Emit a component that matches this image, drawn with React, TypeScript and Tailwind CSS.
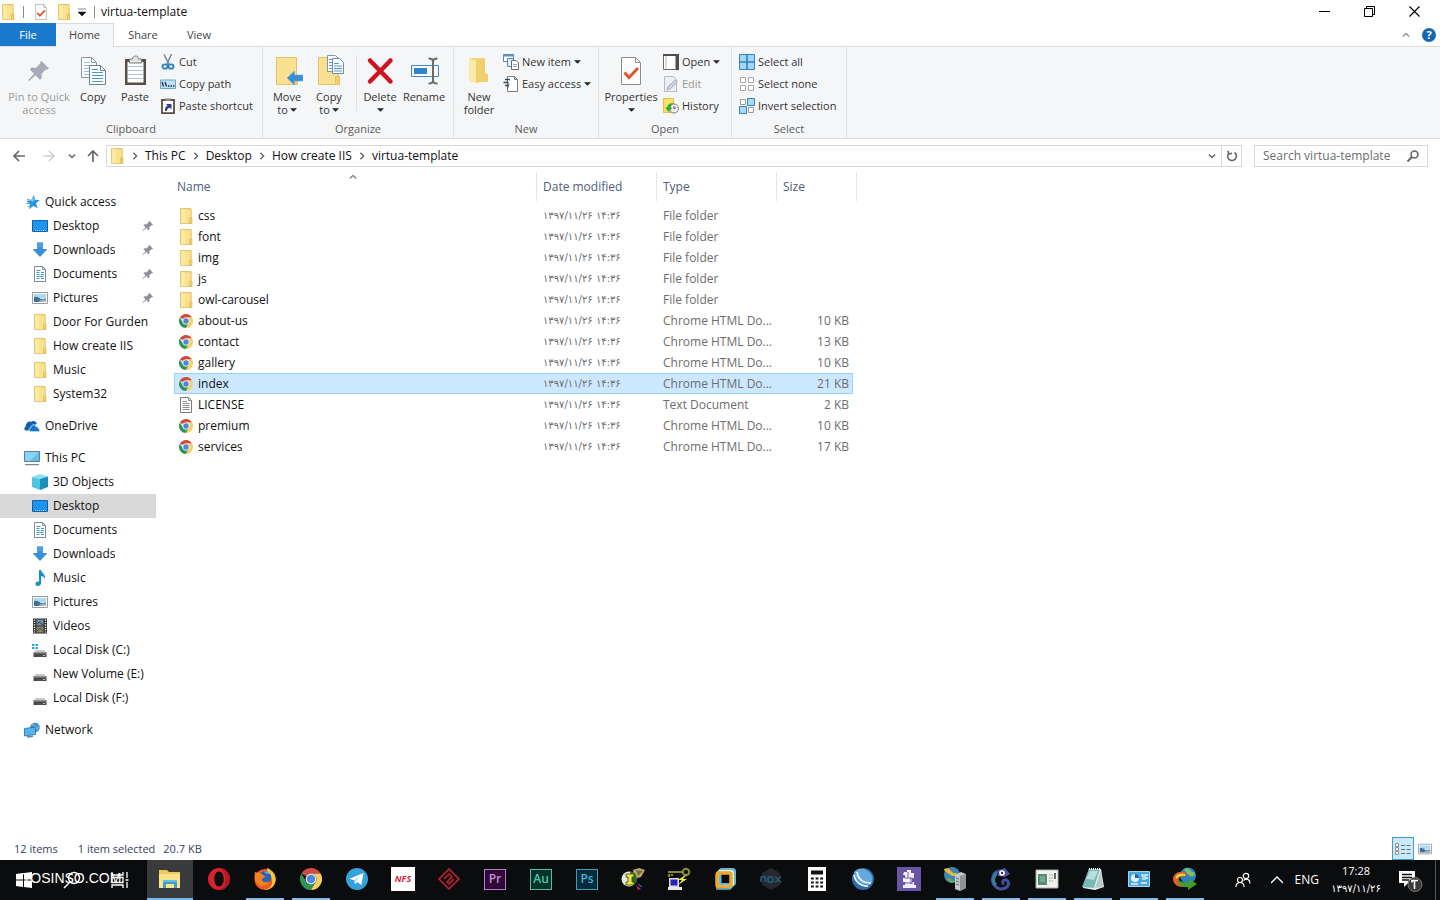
import type { ReactNode } from 'react';

type IconProps = { className?: string };

/* ---------- Shared icons ---------- */

function Folder({ className = 'h-4 w-4' }: IconProps) {
  return (
    <svg viewBox="0 0 16 16" className={className} aria-hidden="true">
      <path d="M2.500.5h10.500v10H2.500z" fill="#f8dc84" stroke="#e0bf62" strokeWidth="0.800" />
      <path d="M2.500.800v14.700h11.200V10.200L13 9.500V.8z" fill="#fce28e" stroke="#e0bf62" strokeWidth="0.800" />
      <path d="M3 1h4v14H3z" fill="#fde9a6" />
      <path d="M11.500 15.300v-5.100h2.300v5.100z" fill="#f5d36f" stroke="#d9b654" strokeWidth="0.700" />
    </svg>
  );
}

function Chrome({ className = 'h-4 w-4' }: IconProps) {
  return (
    <svg viewBox="0 0 24 24" className={className} aria-hidden="true">
      <path d="M12 0A12 12 0 0 1 22.4 6H12A6 6 0 0 0 6.8 9L1.6 6A12 12 0 0 1 12 0z" fill="#d14a40" />
      <path d="M1.6 6A12 12 0 0 0 12 24l5.2-9A6 6 0 0 1 6.8 15z" fill="#2f9458" />
      <path d="M22.4 6A12 12 0 0 1 12 24l5.2-9A6 6 0 0 0 12 6z" fill="#f8d060" />
      <circle cx="12" cy="12" r="5.9" fill="#eef1f6" />
      <circle cx="12" cy="12" r="4.6" fill="#4f86dc" />
    </svg>
  );
}

function TextFile() {
  return (
    <svg viewBox="0 0 16 16" className="h-4 w-4" aria-hidden="true">
      <path d="M2.5.5h8l3 3v12h-11z" fill="#fff" stroke="#7b7b7b" />
      <path d="M10.500.5v3h3M4.500 4.500h4.500M4.500 6.500h7M4.500 8.500h7M4.500 10.500h7M4.500 12.500h7" fill="none" stroke="#8d8d8d" />
    </svg>
  );
}

function Pin({ className = 'h-3 w-3' }: IconProps) {
  return (
    <svg viewBox="0 0 24 24" className={className} fill="currentColor" aria-hidden="true">
      <path d="M14.500 2 22 9.500l-2 1.300-1-.5-4.600 4.600.4 4.200-1.800 1.600-4.500-4.500L2.200 22l-1-1 5.900-6.300-4.300-4.300 1.700-1.800 4.200.4L13.300 4.500l-.4-1.100z" />
    </svg>
  );
}

function Caret() {
  return (
    <svg viewBox="0 0 8 4" className="inline-block h-1 w-[7px] shrink-0" aria-hidden="true">
      <path d="M0 0h8L4 4z" fill="#222" />
    </svg>
  );
}

function Chevron({ className = '' }: IconProps) {
  return (
    <svg viewBox="0 0 10 10" className={`h-2 w-2 ${className}`} fill="none" stroke="currentColor" strokeWidth="1.800" aria-hidden="true">
      <path d="M3 1l4 4-4 4" />
    </svg>
  );
}

/* ---------- Sidebar icons ---------- */

const StarIcon = () => (
  <svg viewBox="0 0 16 16" className="h-4 w-4" aria-hidden="true">
    <path d="M10 1l1 4.700 4.800.3-3.700 3.200 1.500 5-4.400-2.200-4 3.200.6-5.200L2.300 6.800l4.700-.6z" fill="#2795d9" />
    <path d="M9.800 3l.6 3.500L8 8l-1-1.300z" fill="#7cc8f1" />
    <path d="M3 5.500h3M2 9.500h3M3.500 12.500h2" stroke="#69b9e8" />
  </svg>
);
const DesktopIcon = () => (
  <svg viewBox="0 0 16 16" className="h-4 w-4" aria-hidden="true">
    <path d="M.5 2.500h15v11H.5z" fill="#1d95f0" stroke="#12639f" />
    <path d="M3 12.500h12" stroke="#9fd4fa" strokeDasharray="1 1" />
  </svg>
);
const DownloadIcon = () => (
  <svg viewBox="0 0 16 16" className="h-4 w-4" aria-hidden="true">
    <path d="M5 .5h6V7h4.500L8 15 .5 7H5z" fill="#3c8edb" />
    <path d="M5 2.500h6M5 4.500h6" stroke="#6eb0ea" strokeWidth="0.800" />
  </svg>
);
const DocumentIcon = () => (
  <svg viewBox="0 0 16 16" className="h-4 w-4" aria-hidden="true">
    <path d="M2.500.5h8l3 3v12h-11z" fill="#fff" stroke="#7f8b99" />
    <path d="M10.500.5v3h3" fill="none" stroke="#7f8b99" />
    <path d="M4.500 4.500h4M4.500 6.500h3M9 6.500h3M4.500 8.500h3M9 8.500h3M4.500 10.500h7M4.500 12.500h3M9 12.500h3" stroke="#4b8fc9" />
  </svg>
);
const PictureIcon = () => (
  <svg viewBox="0 0 16 16" className="h-4 w-4" aria-hidden="true">
    <path d="M.5 2.500h15v11H.5z" fill="#fff" stroke="#9a9a9a" />
    <path d="M2 4h12v4H2z" fill="#a9daf5" />
    <path d="M2 7c3-1 5 1 7 2l5-.5V12H2z" fill="#3f7195" />
    <path d="M7 11c2-1.500 5-1.500 7-1.500V12H7z" fill="#9bb6c5" />
  </svg>
);
const CloudIcon = () => (
  <svg viewBox="0 0 16 16" className="h-4 w-4" aria-hidden="true">
    <path d="M1.500 12.500C0 12-.2 9.500 1.700 8.800 1.500 5 5 2.500 7.400 4c1-1.800 5-1.500 5.300 2L8 8l-3 4.500z" fill="#0f5fae" />
    <path d="M6.500 13.700c-2.200-.6-1.800-3.700.3-4 .2-3.300 4.300-4 5.300-1 1.700-.5 2.500.6 2.300 1.900 2 .3 1.700 3.100-.1 3.100z" fill="#1876ca" stroke="#fff" strokeWidth="0.700" />
  </svg>
);
const ComputerIcon = () => (
  <svg viewBox="0 0 16 16" className="h-4 w-4" aria-hidden="true">
    <path d="M.5 1.500h15v10H.5z" fill="#5fbdf0" stroke="#5c7f97" />
    <path d="M1 2h14L6 11H1z" fill="#8ad3f7" />
    <path d="M1 14h14v1.200H1z" fill="#75838d" />
  </svg>
);
const CubeIcon = () => (
  <svg viewBox="0 0 16 16" className="h-4 w-4" aria-hidden="true">
    <path d="M0 3l8-3 8 2.500L8 5z" fill="#8be0ef" />
    <path d="M0 3l8 2v11l-8-3z" fill="#4cc6e2" />
    <path d="M8 5l8-2.500V13l-8 3z" fill="#1b8fb9" />
  </svg>
);
const MusicIcon = () => (
  <svg viewBox="0 0 16 16" className="h-4 w-4" aria-hidden="true">
    <path d="M7 0h2c.4 3 5 4 4 9-.5-2-2.300-2.900-3.800-3.100V12.500c0 2.200-1.500 3.500-3.500 3.500-3 0-3.200-4 0-4.500.6-.1 1 0 1.300.2z" fill="#1593b8" />
  </svg>
);
const VideoIcon = () => (
  <svg viewBox="0 0 16 16" className="h-4 w-4" aria-hidden="true">
    <path d="M1 .5h14v15H1z" fill="#2d2d2d" />
    <path d="M4.500 1.500h7v6h-7z" fill="#6f8fa8" />
    <path d="M4.500 8.500h7v6h-7z" fill="#8a8760" />
    <path d="M2.500 1.500v13M13.500 1.500v13" stroke="#fff" strokeWidth="1.400" strokeDasharray="1.200 1.200" />
    <path d="M5 6l2-2 4 3M5 13l3-3 3 3" stroke="#33485a" fill="none" />
  </svg>
);
function DiskIcon({ system = false }: { system?: boolean }) {
  return (
    <svg viewBox="0 0 16 16" className="h-4 w-4" aria-hidden="true">
      {system && <path d="M0 2h2.500v2H0zM3.500 2H6v2H3.500zM0 5h2.500v2H0zM3.500 5H6v2H3.500z" fill="#2aa7df" />}
      <path d="M4 8h8.500l2 2.500h-13z" fill="#c9c9c9" />
      <path d="M1.500 10.500h13V15h-13z" fill="#4a4a4a" />
      <path d="M1.500 11h13" stroke="#8e8e8e" />
      <path d="M11 13.500h2" stroke="#9be07c" />
    </svg>
  );
}
const NetworkIcon = () => (
  <svg viewBox="0 0 16 16" className="h-4 w-4" aria-hidden="true">
    <circle cx="11" cy="5.500" r="4.800" fill="#3d8fc7" />
    <path d="M8 2c3 1 2 3 5 3M9 8c2-1 4 0 6-3" stroke="#a7d8f3" fill="none" />
    <path d="M.5 6.500l11-1.500v7.500L.5 14z" fill="#55b4ec" stroke="#2b6f9f" strokeWidth="0.800" />
    <path d="M3 15l6-.8" stroke="#5c7f97" strokeWidth="1.400" />
  </svg>
);

/* ---------- Ribbon icons ---------- */

const CopyIcon = () => (
  <svg viewBox="0 0 32 32" className="h-8 w-8" aria-hidden="true">
    <path d="M4.500 2.500h10l5 5v15h-15z" fill="#fff" stroke="#8b97a5" />
    <path d="M14.500 2.500v5h5" fill="none" stroke="#8b97a5" />
    <path d="M7 7.500h6M7 10.500h10M7 13.500h10M7 16.500h10M7 19.500h10" stroke="#8fbfe4" />
    <path d="M12.500 10.500h11l5 5v14h-16z" fill="#fff" stroke="#70808f" />
    <path d="M23.500 10.500v5h5" fill="none" stroke="#70808f" />
    <path d="M15 14.500h6M15 17.500h11M15 20.500h11M15 23.500h11M15 26.500h11" stroke="#4a97d4" />
  </svg>
);
function ClipboardIcon() {
  return (
    <svg viewBox="0 0 32 32" className="h-8 w-8" aria-hidden="true">
      <path d="M6 4h21v26H6z" fill="#5a4f45" />
      <path d="M8.500 7h16v20.500h-16z" fill="#fff" />
      <path d="M8.500 11.500h16M8.500 15.500h16M8.500 19.500h16M8.500 23.500h16" stroke="#a9c3d8" />
      <path d="M10.500 4h3c0-4 6-4 6 0h3v4h-12z" fill="#dfe3e6" stroke="#77797a" />
    </svg>
  );
}
const ScissorsIcon = () => (
  <svg viewBox="0 0 16 16" className="h-4 w-4" fill="none" aria-hidden="true">
    <path d="M4 .5L9.500 11M11.500 0L6.500 11" stroke="#7b8691" strokeWidth="1.500" />
    <ellipse cx="5" cy="12.500" rx="2.600" ry="2.200" stroke="#2e80bd" strokeWidth="1.800" />
    <ellipse cx="11" cy="12.500" rx="2.600" ry="2.200" stroke="#2e80bd" strokeWidth="1.800" />
  </svg>
);
const CopyPathIcon = () => (
  <svg viewBox="0 0 16 16" className="h-4 w-4" aria-hidden="true">
    <path d="M.5 4h15v8.500H.5z" fill="#bfe2f8" stroke="#6aa7d0" />
    <path d="M2 6l1.500 4.500M5 6l1.500 4.500" stroke="#17334c" strokeWidth="1.300" />
    <path d="M8 10h1.500M10.500 10H12M13 10h1.300" stroke="#17334c" strokeWidth="1.400" />
  </svg>
);
const PasteShortcutIcon = () => (
  <svg viewBox="0 0 16 16" className="h-4 w-4" aria-hidden="true">
    <path d="M2 2h12v13.200H2z" fill="#fff" stroke="#5a4f45" strokeWidth="1.800" />
    <path d="M5 .5h6V3H5z" fill="#8b8b8b" />
    <path d="M5 13c-.3-3 .8-4.700 2.600-5.300L6 6h5.500v5.500L9.900 9.800C8.200 10 7 11 6.800 13z" fill="#2f3f86" />
  </svg>
);
const MoveIcon = () => (
  <svg viewBox="0 0 32 32" className="h-8 w-8" aria-hidden="true">
    <path d="M5.500 2.500h20v27h-20z" fill="#fae191" stroke="#e2c36b" />
    <path d="M22.500 29.500v-8h4v8z" fill="#f2d173" stroke="#e2c36b" />
    <path d="M16 23l7.500-7v4H32v6h-8.500v4z" fill="#3b8fd0" stroke="#6fb1e3" strokeWidth="0.600" />
  </svg>
);
const CopyToIcon = () => (
  <svg viewBox="0 0 32 32" className="h-8 w-8" aria-hidden="true">
    <path d="M5.500 2.500h20v27h-20z" fill="#fae191" stroke="#e2c36b" />
    <path d="M22.500 29.500v-8h4v8z" fill="#f2d173" stroke="#e2c36b" />
    <path d="M14.500.5h8l3 3v13h-11z" fill="#fff" stroke="#8096a9" />
    <path d="M19.500 3.500h7l4 4v11h-11z" fill="#fff" stroke="#708ba3" />
    <path d="M16 4.500h3M16 7.500h3M16 10.500h3M16 13.500h3M21 8.500h5M21 11h8M21 13.500h8M21 16h8" stroke="#4a97d4" />
  </svg>
);
const DeleteIcon = () => (
  <svg viewBox="0 0 32 32" className="h-8 w-8" aria-hidden="true">
    <path d="M6 5.500l20.500 21M26.500 5.500L6 26.500" stroke="#cf1420" strokeWidth="4.500" strokeLinecap="round" />
  </svg>
);
const RenameIcon = () => (
  <svg viewBox="0 0 32 32" className="h-8 w-8" fill="none" aria-hidden="true">
    <path d="M3.500 10.500h27v11h-27z" fill="#f7fbfe" stroke="#4089c7" />
    <path d="M6 13h13v6H6z" fill="#2f84cc" />
    <path d="M20.500 3.500c3 0 4.500 1 4.500 3v19c0 2-1.500 3-4.500 3M29.500 3.500c-3 0-4.500 1-4.500 3v19c0 2 1.500 3 4.500 3" stroke="#6b6b6b" strokeWidth="2" />
  </svg>
);
const NewFolderIcon = () => (
  <svg viewBox="0 0 32 32" className="h-8 w-8" aria-hidden="true">
    <path d="M6 3h16v15l3 1v8H8z" fill="#f6d678" />
    <path d="M6 3l7 3v23l-7-4z" fill="#fceaa9" />
    <path d="M13 6l9-3v16l3 1v6l-12 2z" fill="#f2cf6e" />
  </svg>
);
const NewItemIcon = () => (
  <svg viewBox="0 0 16 16" className="h-4 w-4" aria-hidden="true">
    <path d="M.5.500h10v7H.5z" fill="#fff" stroke="#6a8499" />
    <path d="M.5 1h10v1.500H.5z" fill="#4a97d4" />
    <path d="M4.500 4.500h6v8h-6z" fill="#dff0fb" stroke="#6a8499" />
    <path d="M8.500 6.500h4.500l2.500 2.500v6.500h-7z" fill="#fff" stroke="#6d6d6d" />
    <path d="M10 10.500h4M10 12.500h4" stroke="#9aa7b1" />
  </svg>
);
const EasyAccessIcon = () => (
  <svg viewBox="0 0 16 16" className="h-4 w-4" aria-hidden="true">
    <path d="M4.500.5h7l3 3v12h-10z" fill="#fff" stroke="#7d7d7d" />
    <path d="M11.500.5v3h3" fill="none" stroke="#7d7d7d" />
    <path d="M2 3.500h5M.5 6.500h5M2 9.500h3" stroke="#34495b" strokeWidth="1.300" />
    <path d="M4.500 12.500l1.500-5" stroke="#34495b" />
  </svg>
);
function PropertiesIcon({ className = 'h-8 w-8' }: IconProps) {
  return (
    <svg viewBox="0 0 32 32" className={className} aria-hidden="true">
      <path d="M6.500 2.500h14l5 5v22h-19z" fill="#fff" stroke="#8d8d8d" />
      <path d="M20.500 2.500v5h5" fill="none" stroke="#8d8d8d" />
      <path d="M9.500 17.500l4.500 5 9-9.500" fill="none" stroke="#e0562f" strokeWidth="3" />
    </svg>
  );
}
const OpenIcon = () => (
  <svg viewBox="0 0 16 16" className="h-4 w-4" aria-hidden="true">
    <path d="M.5.500h15v15H.5z" fill="#fff" stroke="#6b6b6b" />
    <path d="M12.500 1H16v15h-3.500z" fill="#4d4d4d" />
    <path d="M0 0h16v2H0z" fill="#4d4d4d" />
    <path d="M3 2v13" stroke="#b5b5b5" />
  </svg>
);
const EditIcon = () => (
  <svg viewBox="0 0 16 16" className="h-4 w-4" aria-hidden="true">
    <path d="M1.500.5h9l3 3v12h-12z" fill="#eceef4" stroke="#b6bac8" />
    <path d="M4 14l1-3.500L12.500 4l2 2-7.200 7z" fill="#cdd0dc" stroke="#a9aec0" />
  </svg>
);
const HistoryIcon = () => (
  <svg viewBox="0 0 16 16" className="h-4 w-4" aria-hidden="true">
    <path d="M.5.500h10v14H.5z" fill="#fae05f" stroke="#dfc24c" />
    <circle cx="11" cy="10.500" r="4.500" fill="#f5f5f5" stroke="#7d7d7d" />
    <path d="M11 8v3l2-1.500" stroke="#555" fill="none" />
    <path d="M4 9.500C4.500 6 8 4.500 11 5.500c-2 .5-3.500 2-3.500 4h2L5.800 14 2 9.500z" fill="#3ba63b" />
  </svg>
);
const SelectAllIcon = () => (
  <svg viewBox="0 0 16 16" className="h-4 w-4" aria-hidden="true">
    <path d="M.5.500h15v15H.5z" fill="#a3d7f7" stroke="#3183bd" />
    <path d="M8 0v16M0 8h16" stroke="#2f83c0" strokeWidth="1.600" />
  </svg>
);
const SelectNoneIcon = () => (
  <svg viewBox="0 0 16 16" className="h-4 w-4" fill="#fff" stroke="#a9a9a9" aria-hidden="true">
    <path d="M1.500 1.500h5v5h-5zM9.500 1.500h5v5h-5zM1.500 9.500h5v5h-5zM9.500 9.500h5v5h-5z" />
  </svg>
);
const InvertIcon = () => (
  <svg viewBox="0 0 16 16" className="h-4 w-4" aria-hidden="true">
    <path d="M1.500 1.500h5v5h-5zM9.500 9.500h5v5h-5z" fill="#fff" stroke="#9a9a9a" />
    <path d="M8.500.500h7v7h-7zM.5 8.500h7v7h-7z" fill="#a8d9f7" stroke="#3183bd" />
  </svg>
);

/* ---------- Ribbon parts ---------- */

function BigButton({ icon, width, children }: { icon: ReactNode; width: string; children: ReactNode }) {
  return (
    <button type="button" className={`flex ${width} shrink-0 flex-col items-center pt-1 text-center leading-[13px]`}>
      {icon}
      <span className="mt-[3px] flex flex-col items-center whitespace-nowrap">{children}</span>
    </button>
  );
}

function SmallButton({ icon, label, caret = false, muted = false }: { icon: ReactNode; label: string; caret?: boolean; muted?: boolean }) {
  return (
    <button type="button" className={`flex h-[22px] items-center gap-[3px] whitespace-nowrap ${muted ? 'text-[#9a9a9a]' : ''}`}>
      {icon}
      <span>{label}</span>
      {caret && <Caret />}
    </button>
  );
}

function Group({ label, width, children }: { label: string; width: string; children: ReactNode }) {
  return (
    <section aria-label={label} className={`flex ${width} shrink-0 flex-col border-r border-[#e2e3e4]`}>
      <div className="flex h-[74px] pt-1">{children}</div>
      <div className="text-center leading-4 text-[#5a5a5a]">{label}</div>
    </section>
  );
}

/* ---------- Data ---------- */

type NavItem = { label: string; icon: ReactNode; pinned?: boolean; active?: boolean };
type NavGroup = { head: NavItem; items: NavItem[] };

const navGroups: NavGroup[] = [
  {
    head: { label: 'Quick access', icon: <StarIcon /> },
    items: [
      { label: 'Desktop', icon: <DesktopIcon />, pinned: true },
      { label: 'Downloads', icon: <DownloadIcon />, pinned: true },
      { label: 'Documents', icon: <DocumentIcon />, pinned: true },
      { label: 'Pictures', icon: <PictureIcon />, pinned: true },
      { label: 'Door For Gurden', icon: <Folder /> },
      { label: 'How create IIS', icon: <Folder /> },
      { label: 'Music', icon: <Folder /> },
      { label: 'System32', icon: <Folder /> },
    ],
  },
  { head: { label: 'OneDrive', icon: <CloudIcon /> }, items: [] },
  {
    head: { label: 'This PC', icon: <ComputerIcon /> },
    items: [
      { label: '3D Objects', icon: <CubeIcon /> },
      { label: 'Desktop', icon: <DesktopIcon />, active: true },
      { label: 'Documents', icon: <DocumentIcon /> },
      { label: 'Downloads', icon: <DownloadIcon /> },
      { label: 'Music', icon: <MusicIcon /> },
      { label: 'Pictures', icon: <PictureIcon /> },
      { label: 'Videos', icon: <VideoIcon /> },
      { label: 'Local Disk (C:)', icon: <DiskIcon system /> },
      { label: 'New Volume (E:)', icon: <DiskIcon /> },
      { label: 'Local Disk (F:)', icon: <DiskIcon /> },
    ],
  },
  { head: { label: 'Network', icon: <NetworkIcon /> }, items: [] },
];

type Kind = 'folder' | 'html' | 'text';
const kindLabel: Record<Kind, string> = { folder: 'File folder', html: 'Chrome HTML Do...', text: 'Text Document' };
const files: { name: string; kind: Kind; size?: string; selected?: boolean }[] = [
  { name: 'css', kind: 'folder' },
  { name: 'font', kind: 'folder' },
  { name: 'img', kind: 'folder' },
  { name: 'js', kind: 'folder' },
  { name: 'owl-carousel', kind: 'folder' },
  { name: 'about-us', kind: 'html', size: '10 KB' },
  { name: 'contact', kind: 'html', size: '13 KB' },
  { name: 'gallery', kind: 'html', size: '10 KB' },
  { name: 'index', kind: 'html', size: '21 KB', selected: true },
  { name: 'LICENSE', kind: 'text', size: '2 KB' },
  { name: 'premium', kind: 'html', size: '10 KB' },
  { name: 'services', kind: 'html', size: '17 KB' },
];

function FileIcon({ kind }: { kind: Kind }) {
  if (kind === 'folder') return <Folder />;
  if (kind === 'text') return <TextFile />;
  return <Chrome className="h-3.5 w-4" />;
}

function NavLink({ item, nested = false }: { item: NavItem; nested?: boolean }) {
  return (
    <li>
      <a href="#" className={`flex h-6 items-center gap-[5px] whitespace-nowrap pr-0.5 ${nested ? 'pl-8' : 'pl-6'} ${item.active ? 'bg-[#d9d9d9]' : ''}`}>
        <span className="shrink-0">{item.icon}</span>
        <span className="flex-1">{item.label}</span>
        {item.pinned && <Pin className="h-3 w-3 text-[#8b9097]" />}
      </a>
    </li>
  );
}

/* ---------- Taskbar ---------- */

function AdobeIcon({ text, tone }: { text: string; tone: string }) {
  return <span className={`flex h-[21px] w-[22px] items-center justify-center border text-[12px] font-semibold leading-4 ${tone}`}>{text}</span>;
}

const ExplorerIcon = () => (
  <svg viewBox="0 0 24 24" className="h-6 w-6" aria-hidden="true">
    <path d="M1 3h8l2 2h11v16H1z" fill="#f0c75c" />
    <path d="M1 7h21v14H1z" fill="#fbe38e" />
    <path d="M5 21v-8h14v8h-3v-4H8v4z" fill="#3d9fc9" />
    <path d="M5 13h14v2H5z" fill="#63bfe0" />
  </svg>
);
const OperaIcon = () => (
  <svg viewBox="0 0 24 24" className="h-6 w-6" aria-hidden="true">
    <path fillRule="evenodd" d="M12 1a11 11 0 1 0 0 22 11 11 0 0 0 0-22zm0 3.500c3 0 4.700 3.300 4.700 7.500s-1.700 7.500-4.700 7.500S7.300 16.200 7.300 12 9 4.500 12 4.500z" fill="#d9222d" />
    <path fillRule="evenodd" d="M12 1c6 0 11 5 11 11s-5 11-11 11c4-1 6.500-5 6.500-11S16 2 12 1z" fill="#b01824" />
  </svg>
);
const FirefoxIcon = () => (
  <svg viewBox="0 0 24 24" className="h-6 w-6" aria-hidden="true">
    <circle cx="12" cy="12.500" r="10.500" fill="#ef5a24" />
    <path d="M14 1c5 2 9 6 8.800 12C22 19 17 23.500 11 23c6-1 9-5 8-10-.5-4-5-6-5-12z" fill="#fcc62f" />
    <circle cx="12" cy="10.500" r="6.300" fill="#2a62b5" />
    <path d="M2 5c2 1 4 .5 6 1.500 2 .8 2 2.500 4.500 2.500-1 2-3.500 1.800-3.500 4 .5 2.600 4.500 3 7 1-1 5-7 6-10.500 3.500S1 10 2 5z" fill="#f58220" />
    <path d="M11 5c2-1 5 0 6 2l-3-.3z" fill="#64b4e6" />
  </svg>
);
const TelegramIcon = () => (
  <svg viewBox="0 0 24 24" className="h-6 w-6" aria-hidden="true">
    <circle cx="12" cy="12" r="11" fill="#35a3da" />
    <path d="M4.500 11.700L18.500 6l-2.200 12-4-3-2.200 2.300-.8-4z" fill="#fff" />
    <path d="M9.300 13.300L16 8.300l-5.300 6z" fill="#a9cfe3" />
  </svg>
);
const NfsIcon = () => (
  <span className="flex h-6 w-6 items-center justify-center bg-white text-[9px] font-bold italic text-[#d01f3c]">NFS</span>
);
const DiamondIcon = () => (
  <svg viewBox="0 0 24 24" className="h-6 w-6" fill="none" stroke="#a3202c" aria-hidden="true">
    <path d="M12 2l10 10-10 10L2 12z" strokeWidth="1.800" />
    <path d="M7 12l5-5 3 3-5 5M17 12l-5 5-2-2 5-5" strokeWidth="1.900" />
  </svg>
);
const InspectorIcon = () => (
  <svg viewBox="0 0 24 24" className="h-6 w-6" aria-hidden="true">
    <path d="M12 3l6-2 6 2-4 7-7 2z" fill="#c9a26d" />
    <path d="M15 3l7 1-5 5z" fill="#5f7a3b" />
    <circle cx="8" cy="12" r="7.500" fill="#e9e9e4" />
    <path d="M9 4.500a7.500 7.500 0 0 1 2 14.500z" fill="#2b6a2d" />
    <path d="M5 7h8v3h-2v5h2v3H5v-3h2v-5H5z" fill="#eee43d" stroke="#3f3c10" strokeWidth="0.800" />
    <path d="M15 18l5 4-3 1z" fill="#b23345" />
    <path d="M17 17l4 3" stroke="#3159b3" strokeWidth="1.500" />
  </svg>
);
const PuttyIcon = () => (
  <svg viewBox="0 0 24 24" className="h-6 w-6" aria-hidden="true">
    <path d="M1 5h14M2 7v3M5 7v2" stroke="#8c8435" strokeWidth="2.200" />
    <circle cx="19" cy="5" r="3.200" fill="none" stroke="#8c8435" strokeWidth="2.200" />
    <path d="M2 11h10v9H2z" fill="#ddd" />
    <path d="M3.500 12.500h7v6h-7z" fill="#2222bd" />
    <path d="M1 20h14v3H1z" fill="#e6e6e6" />
    <path d="M20 7l-9 6h4l-4 5 9-6h-4z" fill="#f5ee37" />
  </svg>
);
const VmwareIcon = () => (
  <svg viewBox="0 0 24 24" className="h-6 w-6" fill="none" aria-hidden="true">
    <rect x="7" y="2.500" width="14.500" height="15" rx="2" stroke="#69b7d2" strokeWidth="3" />
    <rect x="5" y="4" width="15" height="15" rx="2" stroke="#e9edd0" strokeWidth="2" />
    <rect x="4" y="6" width="14" height="14" rx="2" stroke="#eda72d" strokeWidth="3.500" />
    <path d="M3 22h14l3-3" stroke="#5fb7d2" strokeWidth="1.500" />
  </svg>
);
const NoxIcon = () => (
  <svg viewBox="0 0 24 24" className="h-6 w-6" fill="none" aria-hidden="true">
    <path d="M12 1l9 5v12l-9 5-9-5V6z" fill="#25292d" />
    <path d="M2 15v-4c0-2 4.500-2 4.500 0v4M14 12.500c0-4-5-4-5 0s5 4 5 0zM16 9.500l6 6M22 9.500l-6 6" stroke="#245c75" strokeWidth="1.700" />
  </svg>
);
const CalculatorIcon = () => (
  <svg viewBox="0 0 24 24" className="h-6 w-6" aria-hidden="true">
    <path d="M3 0h18v24H3z" fill="#fff" />
    <path d="M6 3.500h12v4H6z" fill="#111" />
    <path d="M6 11.500h12M6 15.500h12M6 19.500h12" stroke="#111" strokeWidth="2.200" strokeDasharray="2.800 1.800" />
  </svg>
);
const SwirlIcon = () => (
  <svg viewBox="0 0 24 24" className="h-6 w-6" aria-hidden="true">
    <circle cx="12" cy="12" r="11" fill="#2c6cab" />
    <path d="M3 5c5-6 15-3 18 4 1 3 0 7-2 9C11 19 3 13 3 5z" fill="#67a8dc" />
    <path d="M6 5c1 7 6 11 14 11M3 8c1 7 8 12 14 11" stroke="#f2f8fc" strokeWidth="1.700" fill="none" />
  </svg>
);
const CastleIcon = () => (
  <svg viewBox="0 0 24 24" className="h-6 w-6" aria-hidden="true">
    <path d="M0 0h24v24H0z" fill="#6a55a5" />
    <path d="M7 5h3V3h4v3h3v5h-2v4h2v3h2v3H6v-3h2v-3H6v-4h2V8H6z" fill="#f3effa" />
    <path d="M11 5v5M8 11h7M8 16h8M14 11v6" stroke="#6a55a5" />
  </svg>
);
const IisIcon = () => (
  <svg viewBox="0 0 24 24" className="h-6 w-6" aria-hidden="true">
    <circle cx="9" cy="8" r="8" fill="#3b86b7" />
    <path d="M1 2c5-2 6 1 8 3s5 0 6 3c-4 2-7 1-9-1S2 6 1 2z" fill="#e5b93d" />
    <path d="M3 12c3-3 7 1 9 3l-4 1z" fill="#62a94b" />
    <path d="M12 8l6-3 5 2v14l-6 3-5-2z" fill="#c4c8cb" />
    <path d="M17 9l6-2v14l-6 3z" fill="#8e9397" />
    <path d="M13 11l3 1M13 14l3 1M13 17l3 1" stroke="#62686d" />
  </svg>
);
const ChameleonIcon = () => (
  <svg viewBox="0 0 24 24" className="h-6 w-6" fill="none" aria-hidden="true">
    <path d="M18 7C14 2 6 3 4 9.500 1.500 17 8 23.500 15 21.500c5-1.500 6-6.500 2.500-8.500-3.500-1-5 3-2.500 4" stroke="#414f9d" strokeWidth="3" />
    <path d="M8 6c-4 3-5 9-1 12" stroke="#2e83a7" strokeWidth="3" />
    <path d="M10 3l6-2 5 6-5 3-7-1z" fill="#4f51a0" />
    <circle cx="13" cy="6" r="2.800" fill="#fff" />
    <circle cx="13" cy="6" r="1.200" fill="#333" />
  </svg>
);
const WindowAppIcon = () => (
  <svg viewBox="0 0 24 24" className="h-6 w-6" aria-hidden="true">
    <path d="M1 3h22v18H1z" fill="#f3f4f0" stroke="#aab0a9" />
    <path d="M3 7h9v11H3z" fill="#568b77" />
    <path d="M5 9h5v6H5z" fill="#76a893" />
    <path d="M14 8h4M14 11h4M14 14h4" stroke="#8d9a92" strokeDasharray="1.500 1" />
    <path d="M20 6v6" stroke="#303d36" strokeWidth="1.500" />
  </svg>
);
const NotepadIcon = () => (
  <svg viewBox="0 0 24 24" className="h-6 w-6" aria-hidden="true">
    <path d="M8 2h12l3 18-9 3-12-2z" fill="#eef1ec" />
    <path d="M8 2h11l-6 19-12-1z" fill="#79b7b8" />
    <path d="M9 4h8l-4 9c-3-1-6-1-8-1z" fill="#b8dfdf" />
    <path d="M8 2h12" stroke="#fff" strokeWidth="2" strokeDasharray="1 1" />
    <path d="M14 21l6-18 2 17z" fill="#b3c9c5" />
  </svg>
);
const MonitorAppIcon = () => (
  <svg viewBox="0 0 24 24" className="h-6 w-6" aria-hidden="true">
    <path d="M1.500 4.500h21v15h-21z" fill="#49a9de" stroke="#9bd6f2" />
    <circle cx="8" cy="11" r="4" fill="#e0f3fc" />
    <path d="M8 11V7a4 4 0 0 1 4 4z" fill="#2069a6" />
    <path d="M14 8h2v5M18 13V8h3M18 11h3M4 17h7M14 16h6" stroke="#e0f3fc" strokeWidth="1.300" fill="none" />
  </svg>
);
const IdmIcon = () => (
  <svg viewBox="0 0 24 24" className="h-6 w-6" aria-hidden="true">
    <circle cx="15" cy="8.500" r="8" fill="#2c80bd" />
    <path d="M11 2c4-2 6 0 7 2 2 2 4 0 4 4-5 4-8-1-11-6z" fill="#7cc06a" />
    <path d="M12 5C2 3-3 11 2 17c4 4 9 3 12 2l1-3c-6 1-10-1-9-4 0-2 4-3 8-3z" fill="#e3602b" />
    <path d="M12 7C4 6 2 9 3 12c2-3 5-4 9-3z" fill="#f7dc45" />
    <path d="M6 11c-1 3 3 5 10 4v-3l8 5-9 6v-3C8 21 3 16 6 11z" fill="#3f9e33" />
  </svg>
);

const apps: { name: string; icon: ReactNode; running?: boolean }[] = [
  { name: 'Opera', icon: <OperaIcon /> },
  { name: 'Firefox', icon: <FirefoxIcon />, running: true },
  { name: 'Chrome', icon: <Chrome className="h-[22px] w-[22px]" />, running: true },
  { name: 'Telegram', icon: <TelegramIcon /> },
  { name: 'Need for Speed', icon: <NfsIcon /> },
  { name: 'Launcher', icon: <DiamondIcon /> },
  { name: 'Premiere', icon: <AdobeIcon text="Pr" tone="border-[#b77bc9] bg-[#2d0a36] text-[#c98bdb]" /> },
  { name: 'Audition', icon: <AdobeIcon text="Au" tone="border-[#4fc0a0] bg-[#05322a] text-[#4fc7a6]" /> },
  { name: 'Photoshop', icon: <AdobeIcon text="Ps" tone="border-[#36a3bd] bg-[#062a3a] text-[#47b3d3]" /> },
  { name: 'Inspector', icon: <InspectorIcon /> },
  { name: 'PuTTY', icon: <PuttyIcon /> },
  { name: 'VMware', icon: <VmwareIcon /> },
  { name: 'Nox', icon: <NoxIcon /> },
  { name: 'Calculator', icon: <CalculatorIcon /> },
  { name: 'Browser', icon: <SwirlIcon /> },
  { name: 'Castle', icon: <CastleIcon /> },
  { name: 'IIS Manager', icon: <IisIcon />, running: true },
  { name: 'Chameleon', icon: <ChameleonIcon />, running: true },
  { name: 'Panel', icon: <WindowAppIcon />, running: true },
  { name: 'Notepad', icon: <NotepadIcon />, running: true },
  { name: 'Monitor', icon: <MonitorAppIcon />, running: true },
  { name: 'Download Manager', icon: <IdmIcon />, running: true },
];

function Taskbar() {
  return (
    <footer className="relative flex h-10 shrink-0 items-stretch overflow-hidden bg-[#0b0c0e] text-white">
      <div className="flex w-[147px] shrink-0 items-center">
        <button type="button" aria-label="Start" className="flex w-12 justify-center">
          <svg viewBox="0 0 16 16" className="h-4 w-4" fill="#fff" aria-hidden="true">
            <path d="M0 2l7-1v6.500H0zM8 1l8-1v7.500H8zM0 8.500h7V15l-7-1zM8 8.500h8V16l-8-1z" />
          </svg>
        </button>
        <button type="button" aria-label="Search" className="flex w-12 justify-center">
          <svg viewBox="0 0 18 18" className="h-[18px] w-[18px]" fill="none" stroke="#fff" strokeWidth="1.500" aria-hidden="true">
            <circle cx="11" cy="7" r="5.500" />
            <path d="M7 11l-6 6" />
          </svg>
        </button>
        <button type="button" aria-label="Task view" className="flex w-12 justify-center">
          <svg viewBox="0 0 18 18" className="h-[18px] w-[18px]" fill="none" stroke="#fff" strokeWidth="1.300" aria-hidden="true">
            <path d="M1 1v3h11V1M1 17v-3h11v3M1 6.500h11v5H1zM16 1v6M16 11v6M14.500 9h3" />
          </svg>
        </button>
      </div>
      <span className="pointer-events-none absolute left-[22px] top-2.5 font-['Liberation_Sans',Arial,sans-serif] text-[14px] leading-4">TOSINSO.COM</span>
      <button type="button" aria-label="File Explorer" className="mr-[3px] flex w-[46px] shrink-0 items-center justify-center border-b-2 border-[#76b9ed] bg-[#383a3c]">
        <ExplorerIcon />
      </button>
      {apps.map((app) => (
        <button key={app.name} type="button" aria-label={app.name} className="flex w-[46px] shrink-0 flex-col items-center">
          <span className="flex h-[38px] items-center">{app.icon}</span>
          {app.running && <span className="h-0.5 w-[38px] bg-[#86b9e6]" />}
        </button>
      ))}
      <div className="ml-auto flex shrink-0 items-center">
        <button type="button" aria-label="People" className="mr-5">
          <svg viewBox="0 0 16 16" className="h-4 w-4" fill="none" stroke="#fff" strokeWidth="1.200" aria-hidden="true">
            <circle cx="11" cy="4" r="2.700" />
            <circle cx="5" cy="8" r="2.500" />
            <path d="M1 15c0-6 8-6 8 0M8.500 8.500c3-3 6.500-1 6.500 3" />
          </svg>
        </button>
        <button type="button" aria-label="Show hidden icons" className="mr-3">
          <svg viewBox="0 0 12 12" className="h-3 w-3" fill="none" stroke="#fff" strokeWidth="1.400" aria-hidden="true">
            <path d="M0 9l6-6 6 6" />
          </svg>
        </button>
        <button type="button" className="mr-3 text-[12px]">ENG</button>
        <div className="mr-[18px] w-[50px] text-center text-[11px] leading-[18px]">
          <div>17:28</div>
          <div className="whitespace-nowrap font-['DejaVu_Sans',sans-serif] text-[10px] leading-[18px]">۱۳۹۷/۱۱/۲۶</div>
        </div>
        <button type="button" aria-label="Notifications" className="mr-3">
          <svg viewBox="0 0 24 24" className="h-6 w-6" aria-hidden="true">
            <path d="M0 3h16v12H9l-4 4v-4H0z" fill="#fff" />
            <path d="M3 6.500h10M3 9.500h10M3 12h7" stroke="#111" strokeWidth="1.300" />
            <circle cx="16" cy="16.500" r="7" fill="#3a3a3a" stroke="#777" />
            <path d="M13 14.500v-2h6M15.500 12.500V21" stroke="#fff" strokeWidth="1.600" fill="none" />
          </svg>
        </button>
        <span className="mr-1 h-10 w-px bg-[#55585b]" />
      </div>
    </footer>
  );
}

/* ---------- Page ---------- */

const crumbs = ['This PC', 'Desktop', 'How create IIS', 'virtua-template'];

export default function App() {
  return (
    <div className="flex min-h-screen flex-col overflow-hidden bg-white font-['Open_Sans','Noto_Sans',sans-serif] text-[12px] leading-4 text-[#111]">
      <header className="flex h-[23px] shrink-0 items-center">
        <div className="flex items-center">
          <Folder className="h-4 w-4" />
          <span className="ml-[7px] h-3 w-px bg-[#8b8b8b]" />
          <PropertiesIcon className="ml-2 h-[18px] w-[18px]" />
          <Folder className="ml-1.5 h-4 w-4" />
          <svg viewBox="0 0 8 8" className="ml-1.5 h-2 w-2" aria-hidden="true">
            <path d="M0 1h8M0 4h8L4 8z" fill="#111" stroke="#111" strokeWidth="0.500" />
          </svg>
          <span className="ml-2 h-3 w-px bg-[#8b8b8b]" />
          <h1 className="ml-1.5">virtua-template</h1>
        </div>
        <div className="ml-auto mr-[3px] flex text-black">
          <button type="button" aria-label="Minimize" className="flex h-5 w-[45px] items-center justify-center">
            <svg viewBox="0 0 11 11" className="h-[11px] w-[11px]" stroke="currentColor" aria-hidden="true"><path d="M0 5.500h11" /></svg>
          </button>
          <button type="button" aria-label="Restore" className="flex h-5 w-[45px] items-center justify-center">
            <svg viewBox="0 0 11 11" className="h-[11px] w-[11px]" fill="none" stroke="currentColor" aria-hidden="true"><path d="M.5 2.500h8v8h-8zM2.500 2.500v-2h8v8h-2" /></svg>
          </button>
          <button type="button" aria-label="Close" className="flex h-5 w-[45px] items-center justify-center">
            <svg viewBox="0 0 11 11" className="h-[11px] w-[11px]" stroke="currentColor" strokeWidth="1.200" aria-hidden="true"><path d="M.5.500l10 10M10.500.500l-10 10" /></svg>
          </button>
        </div>
      </header>

      <nav aria-label="Ribbon tabs" className="flex h-6 shrink-0 items-stretch border-b border-[#dadbdc] text-[11px] text-[#444]">
        <button type="button" className="w-14 bg-[#1979ca] text-white">File</button>
        <button type="button" className="-mb-px w-[58px] border-r border-t border-[#dadbdc] bg-[#f5f6f7] pb-0.5">Home</button>
        <button type="button" className="w-[58px]">Share</button>
        <button type="button" className="w-[54px]">View</button>
        <div className="ml-auto mr-1 flex items-center gap-3">
          <button type="button" aria-label="Collapse ribbon" className="text-[#8f959c]"><Chevron className="-rotate-90" /></button>
          <button type="button" aria-label="Help" className="flex h-3.5 w-3.5 items-center justify-center rounded-full bg-[#1468b3] text-[11px] font-bold leading-3 text-white">?</button>
        </div>
      </nav>

      <div className="flex h-[92px] shrink-0 border-b border-[#dadbdc] bg-[#f5f6f7] text-[11px] text-[#333]">
        <Group label="Clipboard" width="w-[263px]">
          <div className="flex pl-1.5 text-[#9a9a9a]">
            <BigButton width="w-[66px]" icon={<span className="flex h-8 w-8 items-center justify-center"><Pin className="h-6 w-6 text-[#a7abb7]" /></span>}>
              <span>Pin to Quick</span>
              <span>access</span>
            </BigButton>
          </div>
          <BigButton width="w-[42px]" icon={<CopyIcon />}>Copy</BigButton>
          <BigButton width="w-[42px]" icon={<ClipboardIcon />}>Paste</BigButton>
          <div className="pl-1">
            <SmallButton icon={<ScissorsIcon />} label="Cut" />
            <SmallButton icon={<CopyPathIcon />} label="Copy path" />
            <SmallButton icon={<PasteShortcutIcon />} label="Paste shortcut" />
          </div>
        </Group>
        <Group label="Organize" width="w-[191px]">
          <div className="flex pl-[3px]">
            <BigButton width="w-[42px]" icon={<MoveIcon />}>
              <span>Move</span>
              <span className="flex items-center gap-0.5">to <Caret /></span>
            </BigButton>
            <BigButton width="w-[42px]" icon={<CopyToIcon />}>
              <span>Copy</span>
              <span className="flex items-center gap-0.5">to <Caret /></span>
            </BigButton>
          </div>
          <span className="ml-1.5 mt-1 h-14 w-px bg-[#e2e3e4]" />
          <div className="flex pl-0.5">
            <BigButton width="w-[42px]" icon={<DeleteIcon />}>
              <span>Delete</span>
              <span className="flex h-[13px] items-center"><Caret /></span>
            </BigButton>
            <BigButton width="w-[46px]" icon={<RenameIcon />}>Rename</BigButton>
          </div>
        </Group>
        <Group label="New" width="w-[145px]">
          <div className="flex pl-1">
            <BigButton width="w-[42px]" icon={<NewFolderIcon />}>
              <span>New</span>
              <span>folder</span>
            </BigButton>
          </div>
          <div className="pl-[3px]">
            <SmallButton icon={<NewItemIcon />} label="New item" caret />
            <SmallButton icon={<EasyAccessIcon />} label="Easy access" caret />
          </div>
        </Group>
        <Group label="Open" width="w-[133px]">
          <BigButton width="w-[64px]" icon={<PropertiesIcon />}>
            <span>Properties</span>
            <span className="flex h-[13px] items-center"><Caret /></span>
          </BigButton>
          <div>
            <SmallButton icon={<OpenIcon />} label="Open" caret />
            <SmallButton icon={<EditIcon />} label="Edit" muted />
            <SmallButton icon={<HistoryIcon />} label="History" />
          </div>
        </Group>
        <Group label="Select" width="w-[115px]">
          <div className="pl-[7px]">
            <SmallButton icon={<SelectAllIcon />} label="Select all" />
            <SmallButton icon={<SelectNoneIcon />} label="Select none" />
            <SmallButton icon={<InvertIcon />} label="Invert selection" />
          </div>
        </Group>
      </div>

      <div className="flex h-[34px] shrink-0 items-center pr-3">
        <div className="flex w-[106px] shrink-0 items-center text-[#666]">
          <button type="button" aria-label="Back" className="ml-[13px]">
            <svg viewBox="0 0 12 12" className="h-3 w-3" fill="none" stroke="currentColor" strokeWidth="1.600" aria-hidden="true"><path d="M12 6H1M6 1L1 6l5 5" /></svg>
          </button>
          <button type="button" aria-label="Forward" className="ml-[18px] text-[#cfcfcf]">
            <svg viewBox="0 0 12 12" className="h-3 w-3" fill="none" stroke="currentColor" strokeWidth="1.600" aria-hidden="true"><path d="M0 6h11M6 1l5 5-5 5" /></svg>
          </button>
          <button type="button" aria-label="Recent locations" className="ml-[13px]"><Chevron className="rotate-90" /></button>
          <button type="button" aria-label="Up" className="ml-[11px]">
            <svg viewBox="0 0 12 12" className="h-3 w-3" fill="none" stroke="currentColor" strokeWidth="1.700" aria-hidden="true"><path d="M6 12V1M1 6l5-5 5 5" /></svg>
          </button>
        </div>
        <div className="flex h-[22px] flex-1 items-center border border-[#d9d9d9]">
          <Folder className="ml-0.5 h-4 w-4" />
          <ol className="flex items-center pl-1">
            {crumbs.map((c) => (
              <li key={c} className="flex items-center">
                <Chevron className="mx-0.5 text-[#666]" />
                <a href="#" className="px-1 text-[#111]">{c}</a>
              </li>
            ))}
          </ol>
          <button type="button" aria-label="Previous locations" className="ml-auto mr-[5px] text-[#666]"><Chevron className="rotate-90" /></button>
          <button type="button" aria-label="Refresh" className="flex h-full w-5 items-center justify-center border-l border-[#d9d9d9] text-[#666]">
            <svg viewBox="0 0 12 12" className="h-3 w-3" fill="none" stroke="currentColor" strokeWidth="1.600" aria-hidden="true"><path d="M8.500 2.500A4.400 4.400 0 1 1 3 3M2 .8l.8 3.200L6 3.200" /></svg>
          </button>
        </div>
        <label className="ml-3 flex h-[22px] w-[174px] items-center border border-[#d9d9d9] px-2">
          <input type="search" aria-label="Search virtua-template" placeholder="Search virtua-template" className="min-w-0 flex-1 outline-none placeholder:text-[#6d6d6d]" />
          <svg viewBox="0 0 12 12" className="h-3 w-3" fill="none" stroke="#666" strokeWidth="1.600" aria-hidden="true"><circle cx="7.500" cy="4.500" r="3.500" /><path d="M5 7L.5 11.500" strokeWidth="2" /></svg>
        </label>
      </div>

      <div className="flex flex-1 items-start">
        <nav aria-label="Folders" className="flex w-[156px] shrink-0 flex-col gap-2 pt-[17px]">
          {navGroups.map((group) => (
            <ul key={group.head.label}>
              <NavLink item={group.head} />
              {group.items.map((item) => <NavLink key={item.label} item={item} nested />)}
            </ul>
          ))}
        </nav>

        <main className="pl-[18px]">
          <table className="w-[679px] table-fixed border-collapse text-left">
            <colgroup>
              <col className="w-[363px]" />
              <col className="w-[120px]" />
              <col className="w-[120px]" />
              <col className="w-[76px]" />
            </colgroup>
            <thead className="text-[#4c607a]">
              <tr className="h-8 align-top">
                <th className="p-0 font-normal">
                  <div className="relative h-7 border-r border-[#e5e5e5] pl-[3px] leading-7">
                    Name
                    <Chevron className="absolute left-1/2 top-0 -ml-1.5 -rotate-90 text-[#8b8b8b]" />
                  </div>
                </th>
                <th className="p-0 font-normal"><div className="h-7 border-r border-[#e5e5e5] pl-1.5 leading-7">Date modified</div></th>
                <th className="p-0 font-normal"><div className="h-7 border-r border-[#e5e5e5] pl-1.5 leading-7">Type</div></th>
                <th className="p-0 font-normal"><div className="-mr-1 h-7 border-r border-[#e5e5e5] pl-1.5 leading-7">Size</div></th>
              </tr>
            </thead>
            <tbody className="text-[#6d6d6d]">
              {files.map((f) => (
                <tr key={f.name} className={`h-[21px] ${f.selected ? 'bg-[#cce8ff] outline outline-1 -outline-offset-1 outline-[#99d1ff]' : ''}`}>
                  <td className="p-0">
                    <div className="flex items-center gap-1 pl-1 text-[#111]">
                      <FileIcon kind={f.kind} />
                      {f.name}
                    </div>
                  </td>
                  <td className="whitespace-nowrap p-0 pl-1.5 font-['DejaVu_Sans',sans-serif] text-[10px]">۱۳۹۷/۱۱/۲۶ ۱۴:۳۶</td>
                  <td className="whitespace-nowrap p-0 pl-1.5">{kindLabel[f.kind]}</td>
                  <td className="whitespace-nowrap p-0 pr-1 text-right">{f.size}</td>
                </tr>
              ))}
            </tbody>
          </table>
        </main>
      </div>

      <div className="flex h-[23px] shrink-0 items-center pl-3.5 pr-2 text-[11px] text-[#33415c]">
        <span>12 items</span>
        <span className="ml-5">1 item selected</span>
        <span className="ml-2">20.7 KB</span>
        <div className="ml-auto flex items-center gap-1">
          <button type="button" aria-label="Details view" className="flex h-[23px] w-[22px] items-center justify-center border border-[#3ba0c9] bg-[#cbe8f6]">
            <svg viewBox="0 0 18 16" className="h-4 w-[18px]" fill="none" stroke="#5c7385" aria-hidden="true">
              <path d="M1.500 2.500h3v3h-3zM1.500 6.500h3v3h-3zM1.500 10.500h3v3h-3z" fill="#fff" stroke="#a08f8f" />
              <path d="M7 4.500h4M12.500 4.500h4M7 8.500h4M12.500 8.500h4M7 12.500h4M12.500 12.500h4" />
            </svg>
          </button>
          <button type="button" aria-label="Large icons view"><span className="flex h-4 w-3.5 items-center"><PictureIcon /></span></button>
        </div>
      </div>

      <Taskbar />
    </div>
  );
}
